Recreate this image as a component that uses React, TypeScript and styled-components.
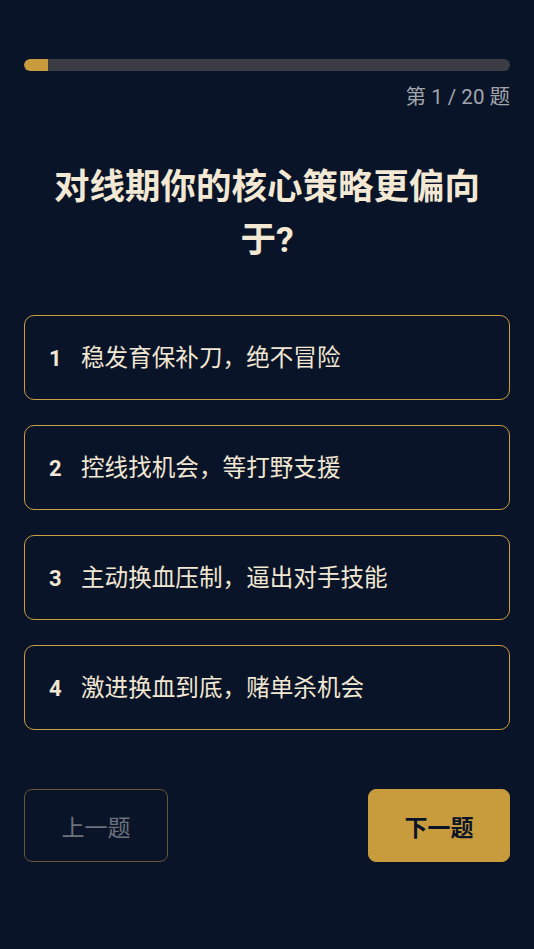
import React from "react";
import styled, { createGlobalStyle } from "styled-components";

const GlobalStyle = createGlobalStyle`
  html, body {
    margin: 0;
    padding: 0;
    background: #0a1428;
  }
  body {
    font-family: Roboto, "Noto Sans CJK SC", sans-serif;
    min-height: 949px;
  }
`;

const Page = styled.div`
  box-sizing: border-box;
  min-height: 949px;
  padding: 59px 24px 40px;
  display: flex;
  flex-direction: column;
`;

const Track = styled.div`
  height: 12px;
  border-radius: 6px;
  background: #3b3c44;
  overflow: hidden;
`;

const Fill = styled.div`
  height: 100%;
  background: #c89b3c;
  border-radius: 6px 0 0 6px;
`;

const Counter = styled.div`
  margin-top: 12px;
  text-align: right;
  font-size: 20.5px;
  line-height: 28px;
  color: #a3a5ad;
`;

const Title = styled.h1`
  margin: 50px 0 0;
  padding: 0 24px;
  text-align: center;
  font-size: 35.5px;
  line-height: 53px;
  font-weight: 700;
  color: #f2e8d4;
`;

const Options = styled.div`
  margin-top: 48px;
  display: flex;
  flex-direction: column;
  gap: 25px;
`;

const Option = styled.button`
  box-sizing: border-box;
  height: 85px;
  display: flex;
  align-items: center;
  padding: 0 24px;
  background: transparent;
  border: 1px solid #cc9e3d;
  border-radius: 10px;
  font-family: inherit;
  color: #f1e7d3;
  text-align: left;
  cursor: pointer;
`;

const OptionLabel = styled.span`
  font-size: 23.6px;
  line-height: 32px;
  margin-top: 2px;
`;

const OptionIndex = styled.span`
  display: inline-block;
  width: 32px;
  font-size: 22px;
  font-weight: 700;
`;

const Nav = styled.div`
  margin-top: 59px;
  display: flex;
  justify-content: space-between;
`;

const NavButton = styled.button<{ $primary?: boolean }>`
  box-sizing: border-box;
  height: 73px;
  width: ${(p) => (p.$primary ? "142px" : "144px")};
  border-radius: 8px;
  font-family: inherit;
  font-size: 23px;
  cursor: pointer;
  border: 1px solid ${(p) => (p.$primary ? "#c89b3c" : "#6b5833")};
  background: ${(p) => (p.$primary ? "#c89b3c" : "transparent")};
  color: ${(p) => (p.$primary ? "#0a1428" : "#6d717c")};
  font-weight: ${(p) => (p.$primary ? 700 : 400)};
`;

const options = [
  "稳发育保补刀，绝不冒险",
  "控线找机会，等打野支援",
  "主动换血压制，逼出对手技能",
  "激进换血到底，赌单杀机会",
];

export default function App() {
  const current = 1;
  const total = 20;
  return (
    <>
      <GlobalStyle />
      <Page>
        <Track>
          <Fill style={{ width: `${(current / total) * 100}%` }} />
        </Track>
        <Counter>
          第 {current} / {total} 题
        </Counter>
        <Title>对线期你的核心策略更偏向于?</Title>
        <Options>
          {options.map((text, i) => (
            <Option key={text}>
              <OptionLabel>
                <OptionIndex>{i + 1}</OptionIndex>
                {text}
              </OptionLabel>
            </Option>
          ))}
        </Options>
        <Nav>
          <NavButton>上一题</NavButton>
          <NavButton $primary>下一题</NavButton>
        </Nav>
      </Page>
    </>
  );
}
